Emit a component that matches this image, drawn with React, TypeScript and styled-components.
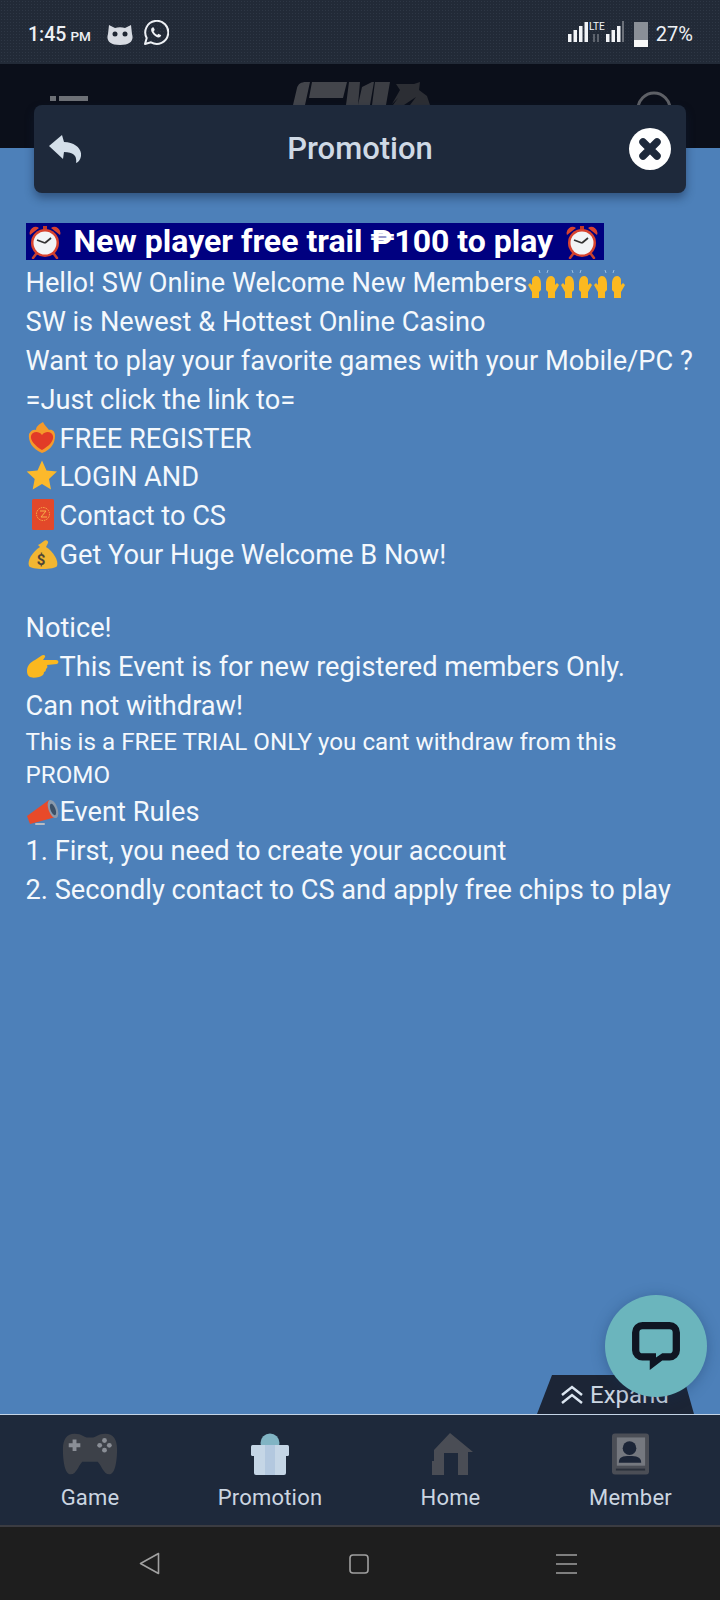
import React from 'react';
import styled, { createGlobalStyle } from 'styled-components';

const Global = createGlobalStyle`
  html, body { margin: 0; padding: 0; background: #4d80b9; }
  * { box-sizing: border-box; }
`;

const Page = styled.div`
  position: relative;
  width: 720px;
  height: 1600px;
  display: flex;
  flex-direction: column;
  overflow: hidden;
  font-family: Roboto, "Liberation Sans", sans-serif;
  background: #4d80b9;
`;

const StatusBar = styled.div`
  height: 64px;
  flex: none;
  background-color: #222a37;
  background-image: radial-gradient(#2e3745 1px, transparent 1px);
  background-size: 3px 3px;
  display: flex;
  align-items: center;
  justify-content: space-between;
  padding: 4px 27px 0 28px;
  color: #eef1f5;
`;
const StatusLeft = styled.div`
  display: flex;
  align-items: center;
`;
const Time = styled.span`
  font-size: 19.5px;
  font-weight: 500;
  width: 79px;
  small { font-size: 13.5px; margin-left: 4px; font-weight: 500; }
`;
const StatusRight = styled.div`
  display: flex;
  align-items: center;
  gap: 8px;
`;
const Percent = styled.span`
  font-size: 20px;
  font-weight: 400;
`;

const Header = styled.div`
  height: 84px;
  flex: none;
  background: #0b0f1a;
  display: flex;
  justify-content: space-between;
  padding: 32px 48px 0 50px;
`;
const HeaderMenu = styled.div`
  display: flex;
  gap: 3px;
  height: 5px;
  width: 38px;
  i { display: block; background: #6d7076; height: 5px; width: 6px; }
  i + i { width: 29px; }
`;

const ModalBar = styled.div`
  position: absolute;
  left: 34px;
  top: 105px;
  width: 652px;
  height: 88px;
  background: #1e293b;
  border-radius: 8px;
  box-shadow: 0 5px 10px rgba(15, 30, 60, 0.45);
  display: flex;
  align-items: center;
  justify-content: space-between;
  padding: 0 15px;
`;
const ModalIcon = styled.div`
  width: 42px;
  height: 42px;
  display: flex;
  align-items: center;
`;
const ModalTitle = styled.div`
  font-size: 31px;
  font-weight: 500;
  color: #cfd9e5;
  margin-top: -1px;
`;

const Content = styled.div`
  flex: 1;
  padding: 75px 0 0 25.5px;
  color: #f4f8fc;
  font-size: 27.2px;
  line-height: 38.9px;
`;
const Line = styled.div<{ $gap?: number }>`
  height: 38.9px;
  white-space: nowrap;
  margin-top: ${p => p.$gap ?? 0}px;
`;
const Small = styled.div`
  font-size: 24.2px;
  line-height: 33.5px;
  width: 630px;
`;
const Highlight = styled.div`
  display: flex;
  align-items: center;
  width: 578px;
  height: 37px;
  margin-bottom: 4px;
  background: #000080;
  font-weight: 700;
  font-size: 32px;
  line-height: 37px;
  color: #fff;
  white-space: pre;
`;
const Emoji = styled.svg<{ $align?: number; $ml?: number; $mr?: number }>`
  display: inline-block;
  flex: none;
  vertical-align: ${p => p.$align ?? -7}px;
  margin-left: ${p => p.$ml ?? 0}px;
  margin-right: ${p => p.$mr ?? 0}px;
`;

const ExpandTab = styled.div`
  position: absolute;
  left: 537px;
  top: 1375px;
  width: 157px;
  height: 39px;
  background: #1c2536;
  clip-path: polygon(15px 0, 146px 0, 157px 100%, 0 100%);
  display: flex;
  align-items: center;
  gap: 7px;
  padding-left: 24px;
  color: #cbd5e1;
  font-size: 24px;
`;
const ChatButton = styled.div`
  position: absolute;
  left: 605px;
  top: 1295px;
  width: 102px;
  height: 102px;
  border-radius: 50%;
  background: #6bb5bd;
  box-shadow: 0 2px 14px rgba(20, 50, 90, 0.35);
  display: flex;
  align-items: center;
  justify-content: center;
`;

const BottomNav = styled.nav`
  height: 113px;
  flex: none;
  background: #1e293b;
  border-top: 1px solid #c4d4e6;
  border-bottom: 2px solid #3b3c42;
  display: grid;
  grid-template-columns: 180px 180px 181px 179px;
`;
const NavItem = styled.div`
  display: flex;
  flex-direction: column;
  align-items: center;
  padding-top: 18px;
  gap: 10px;
  color: #cbd5e1;
  font-size: 22px;
  line-height: 26px;
`;
const NavLabel = styled.span`
  letter-spacing: 0.2px;
`;

const AndroidNav = styled.div`
  height: 73px;
  flex: none;
  background: #1e1e1e;
  display: grid;
  grid-template-columns: 1fr 1fr 1fr;
  align-items: center;
  justify-items: center;
  padding: 0 49px 0 45px;
`;
const SquareKey = styled.svg`
  margin-left: 3px;
`;

const Alarm = ({ ml, mr }: { ml: number; mr: number }) => (
  <Emoji width="32" height="34" viewBox="0 0 32 34" $ml={ml} $mr={mr}>
    <path d="M1 10 A6 6 0 0 1 10 3Z M31 10 A6 6 0 0 0 22 3Z" fill="#d8432e" />
    <rect x="14" y="1" width="4" height="4" fill="#c23a28" />
    <path d="M7 29l-3 4M25 29l3 4" stroke="#c9432f" strokeWidth="2.5" strokeLinecap="round" />
    <circle cx="16" cy="18" r="14" fill="#d8432e" />
    <circle cx="16" cy="18" r="11.5" fill="#f2f4f6" />
    <path d="M16 18L8 15M16 18l6-5" stroke="#333" strokeWidth="1.7" fill="none" />
  </Emoji>
);
const Hands = () => (
  <Emoji width="33" height="30" viewBox="0 0 33 30" $align={-7.5}>
    <path d="M12 0l1 3M21 0l-1 3" stroke="#9dbfe0" strokeWidth="1" />
    <path d="M9 6C12 6 14 9 14 14V20L12 22V28H5V22L1 15L3 13L5 15V10C5 8 7 6 9 6Z" fill="#fcb920" />
    <path d="M24 6C21 6 19 9 19 14V20L21 22V28H28V22L32 15L30 13L28 15V10C28 8 26 6 24 6Z" fill="#fcb920" />
  </Emoji>
);
const FlameHeart = () => (
  <Emoji width="34" height="34" viewBox="0 0 34 34">
    <path d="M16 32 C6 28 2 20 3 13 C5 9 8 8 10 9 C10 5 14 3 17 1 C18 4 21 6 23 9 C26 8 29 10 29 15 C29 22 25 29 16 32Z" fill="#f59a2b" />
    <path d="M16 29 C9 25 4 19 5 15 C6 11 12 9 16 14 C20 9 26 11 27 15 C28 20 23 25 16 29Z" fill="#e23b27" />
  </Emoji>
);
const Star = () => (
  <Emoji width="34" height="34" viewBox="0 0 34 34">
    <path d="M16 1.500l4.500 10L31 12.500l-8 7.500 2 10.500L16 25l-9.300 5.500 2-10.500-8-7.500 10.800-1z" fill="#fcb92b" />
  </Emoji>
);
const Envelope = () => (
  <Emoji width="34" height="34" viewBox="0 0 34 34">
    <rect x="6" y="1" width="22" height="31" rx="1.500" fill="#e2482a" />
    <circle cx="17" cy="16" r="6.500" fill="none" stroke="#f8b04a" strokeWidth="1" strokeDasharray="1.500 1" />
    <path d="M14 13h6l-5 6h6" fill="none" stroke="#f8b04a" strokeWidth="1" />
  </Emoji>
);
const MoneyBag = () => (
  <Emoji width="34" height="34" viewBox="0 0 34 34">
    <path d="M14 10 C6 15 1 24 3 29 C5 33 29 33 31 29 C33 24 27 14 20 10Z" fill="#f2b632" />
    <path d="M14 10l-2-2c3-1 4-3 6-4 2-2 5 0 4 2l-2 4z" fill="#f2b632" />
    <text x="15" y="28" fontSize="15" fontWeight="700" fill="#4e4536" textAnchor="middle" fontFamily="Roboto, sans-serif">$</text>
  </Emoji>
);
const Pointing = () => (
  <Emoji width="34" height="30" viewBox="0 0 34 30" $align={-5.5}>
    <path d="M1 19c0-6 4-9 8-11l6-4c2-2 5-1 4 1l-2 3h13c3 0 3 3 1 4l-10 1c1 2 0 3-1 4 0 2-1 3-2 3 0 3-2 4-5 5-5 1-12 2-12-6z" fill="#fbb81f" />
  </Emoji>
);
const Megaphone = () => (
  <Emoji width="34" height="32" viewBox="0 0 34 32" $align={-8.5}>
    <path d="M1 19L23 3l7 17-26 7z" fill="#e84a2a" />
    <ellipse cx="27" cy="12" rx="4.500" ry="9.500" transform="rotate(-20 27 12)" fill="#8a9aac" />
    <ellipse cx="27" cy="12.500" rx="2.500" ry="6" transform="rotate(-20 27 12.500)" fill="#3b5067" />
    <rect x="9" y="26" width="10" height="2" rx="1" fill="#b7bcc4" />
  </Emoji>
);

export default function App() {
  return (
    <Page>
      <Global />
      <StatusBar>
        <StatusLeft>
          <Time>1:45<small>PM</small></Time>
          <svg width="26" height="24" viewBox="0 0 26 24" style={{ marginRight: 10 }}>
            <path d="M2 3l6 3c3-1 7-1 10 0l6-3 1 9c2 6-1 11-12 11S-1 18 1 12z" fill="#d7dbe2" />
            <circle cx="8" cy="12" r="2.500" fill="#1f2733" /><circle cx="18" cy="12" r="2.500" fill="#1f2733" />
          </svg>
          <svg width="26" height="26" viewBox="0 0 26 26" style={{ marginTop: -3 }} fill="none">
            <path d="M2 24l1.700-6.100A11.500 11.500 0 1 1 8 22.300z" stroke="#eef1f5" strokeWidth="2" strokeLinejoin="round" />
            <path d="M9.300 7.500c-1.600 1-1.600 3 0 5.500 1.700 2.500 3.800 4.300 6 4.500 1.500.1 2.700-.9 2.900-2.200l-2.800-1.500-1.100 1.200c-1.700-.6-3-2-3.700-3.700l1.200-1.200-1.300-2.800z" fill="#eef1f5" />
          </svg>
        </StatusLeft>
        <StatusRight>
          <svg width="56" height="26" viewBox="0 0 56 26" style={{ marginRight: 2 }}>
            <g fill="#f2f4f7">
              <rect x="0" y="13" width="3.500" height="8" /><rect x="5.500" y="9" width="3.500" height="12" />
              <rect x="11" y="5" width="3.500" height="16" /><rect x="16.500" y="1" width="3.500" height="20" />
              <rect x="38" y="13" width="3.500" height="8" /><rect x="43.500" y="9" width="3.500" height="12" /><rect x="49" y="5" width="3.500" height="16" />
            </g>
            <rect x="54" y="0" width="2" height="21" fill="#6c717a" />
            <g fill="#5d636d"><rect x="25" y="13" width="2" height="8" /><rect x="29" y="13" width="2" height="8" /></g>
            <text x="21" y="9" fontSize="10" fill="#f2f4f7" fontFamily="Roboto, sans-serif">LTE</text>
          </svg>
          <svg width="14" height="26" viewBox="0 0 14 26">
            <rect x="0" y="1" width="14" height="18" fill="#8a8f97" />
            <rect x="0" y="19" width="14" height="7" fill="#f8f8f8" />
          </svg>
          <Percent>27%</Percent>
        </StatusRight>
      </StatusBar>
      <Header>
        <HeaderMenu><i /><i /></HeaderMenu>
        <svg width="138" height="23" viewBox="0 0 138 23" style={{ marginTop: -14, marginLeft: -2 }}>
          <path d="M1 23 L5 6 C6 2 9 0 14 0 H18 L13 23Z M20 0 H55 L51 16 H17Z" fill="#43454b" />
          <path d="M57 0 H68 L66 23 H54Z M70 5 L 80 0 H 82 L 78 23 H 66 Z M 83 0 H 98 L 94 23 H 80Z" fill="#3c3e44" />
          <path d="M104 2 L122 2 L128 0 L127 8 L135 14 L138 23 H118 L124 15 L112 23 H101 L106 16 L100 22 L108 8Z" fill="#2c2e34" />
        </svg>
        <svg width="36" height="14" viewBox="0 0 36 14" style={{ marginTop: -5 }}>
          <circle cx="18" cy="18" r="16" fill="none" stroke="#5e6066" strokeWidth="3" />
        </svg>
      </Header>
      <ModalBar>
        <ModalIcon>
          <svg width="32" height="28" viewBox="0 0 32 28">
            <path d="M0 11 L13 0 L15 7 C26 7 33 14 32 21 C31.500 24 30 27 27 28 C28 22 26 17 15 17 L14 24 Z" fill="#d4dfea" />
          </svg>
        </ModalIcon>
        <ModalTitle>Promotion</ModalTitle>
        <svg width="42" height="42" viewBox="0 0 42 42">
          <circle cx="21" cy="21" r="21" fill="#fff" />
          <path d="M14 14l14 14M28 14L14 28" stroke="#1e293b" strokeWidth="7.500" strokeLinecap="round" />
        </svg>
      </ModalBar>
      <Content>
        <Highlight><Alarm ml={3} mr={5} /> New player free trail ₱100 to play <Alarm ml={5} mr={4} /></Highlight>
        <Line>Hello! SW Online Welcome New Members<Hands /><Hands /><Hands /></Line>
        <Line>SW is Newest &amp; Hottest Online Casino</Line>
        <Line>Want to play your favorite games with your Mobile/PC ?</Line>
        <Line>=Just click the link to=</Line>
        <Line><FlameHeart />FREE REGISTER</Line>
        <Line><Star />LOGIN AND</Line>
        <Line><Envelope />Contact to CS</Line>
        <Line><MoneyBag />Get Your Huge Welcome B Now!</Line>
        <Line $gap={34}>Notice!</Line>
        <Line><Pointing />This Event is for new registered members Only.</Line>
        <Line>Can not withdraw!</Line>
        <Small>This is a FREE TRIAL ONLY you cant withdraw from this PROMO</Small>
        <Line><Megaphone />Event Rules</Line>
        <Line>1. First, you need to create your account</Line>
        <Line>2. Secondly contact to CS and apply free chips to play</Line>
      </Content>
      <ExpandTab>
        <svg width="22" height="20" viewBox="0 0 22 20" fill="none" stroke="#dbe5f0" strokeWidth="2.500">
          <path d="M1 10l10-8 10 8M1 18l10-8 10 8" />
        </svg>
        Expand
      </ExpandTab>
      <ChatButton>
        <svg width="50" height="50" viewBox="0 0 48 48">
          <path d="M11 1h26a10 10 0 0 1 10 10v17a10 10 0 0 1-10 10h-7l-12 9v-9h-7a10 10 0 0 1-10-10V11a10 10 0 0 1 10-10z M11 8a3 3 0 0 0-3 3v17a3 3 0 0 0 3 3h13v4l6-4h7a3 3 0 0 0 3-3V11a3 3 0 0 0-3-3z" fill="#0f1522" fillRule="evenodd" />
        </svg>
      </ChatButton>
      <BottomNav>
        <NavItem>
          <svg width="58" height="42" viewBox="0 0 60 42">
            <path d="M14 0 C22 0 24 4 28 4 H32 C36 4 38 0 46 0 C54 0 58 6 58 16 C58 28 56 42 50 42 C44 42 42 33 38 29 H22 C18 33 16 42 10 42 C4 42 2 28 2 16 C2 6 6 0 14 0Z" fill="#3d4149" />
            <path d="M14 6v12M8 12h12" stroke="#8a8e96" strokeWidth="4" />
            <g fill="#8a8e96"><circle cx="45" cy="7" r="2.500" /><circle cx="45" cy="17" r="2.500" /><circle cx="40" cy="12" r="2.500" /><circle cx="50" cy="12" r="2.500" /></g>
          </svg>
          <NavLabel>Game</NavLabel>
        </NavItem>
        <NavItem>
          <svg width="38" height="42" viewBox="0 0 38 42">
            <circle cx="19" cy="10" r="9.500" fill="#81b4c4" />
            <rect x="0" y="12" width="38" height="11" rx="1.500" fill="#c5d6e6" />
            <path d="M3 23h32v17a2 2 0 0 1-2 2H5a2 2 0 0 1-2-2z" fill="#c5d6e6" />
            <rect x="14" y="12" width="10" height="30" fill="#b3c8df" />
          </svg>
          <NavLabel>Promotion</NavLabel>
        </NavItem>
        <NavItem>
          <svg width="42" height="42" viewBox="0 0 42 42" style={{ marginLeft: 3 }}>
            <path d="M19 0L42 19H37V42H27V20H13V42H1V28H3V17z" fill="#4a4d55" />
          </svg>
          <NavLabel>Home</NavLabel>
        </NavItem>
        <NavItem>
          <svg width="37" height="42" viewBox="0 0 38 42">
            <rect x="0" y="0" width="38" height="42" rx="3" fill="#4b4e56" />
            <rect x="5" y="4" width="29" height="29" fill="#75787f" />
            <circle cx="18" cy="15" r="7" fill="#1c2537" />
            <path d="M7 30c0-6 4-7 11-7s12 1 12 7z" fill="#1c2537" />
            <rect x="4" y="36" width="30" height="2" fill="#2a2f3a" />
          </svg>
          <NavLabel>Member</NavLabel>
        </NavItem>
      </BottomNav>
      <AndroidNav>
        <svg width="21" height="23" viewBox="0 0 21 23" fill="none" stroke="#a0a0a0" strokeWidth="1.600" strokeLinejoin="round">
          <path d="M19.500 1.500v20L1.500 11.500z" />
        </svg>
        <SquareKey width="20" height="20" viewBox="0 0 20 20" fill="none" stroke="#a0a0a0" strokeWidth="1.600">
          <rect x="1" y="1" width="18" height="18" rx="3" />
        </SquareKey>
        <svg width="21" height="20" viewBox="0 0 21 20" stroke="#a0a0a0" strokeWidth="1.600">
          <path d="M0 1h21M0 10h21M0 19h21" />
        </svg>
      </AndroidNav>
    </Page>
  );
}
